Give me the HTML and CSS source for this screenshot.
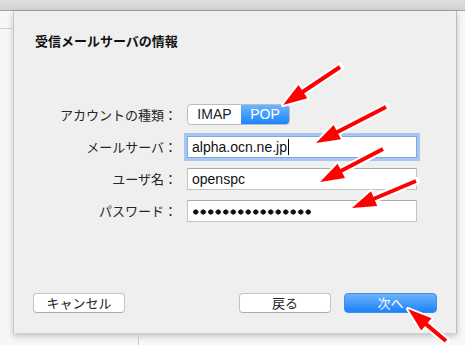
FILE: index.html
```html
<!DOCTYPE html>
<html>
<head>
  <meta charset="utf-8">
  <title>受信メールサーバの情報</title>
  <link rel="stylesheet" href="styles.css">
</head>
<body>
  <div class="toolbar"></div>

  <div class="sheet">
    <h1 class="title">受信メールサーバの情報</h1>

    <div class="form">
      <div class="label">アカウントの種類：</div>
      <div class="segmented">
        <span class="seg">IMAP</span>
        <span class="seg seg-on">POP</span>
      </div>

      <div class="label">メールサーバ：</div>
      <div class="field field-focus">alpha.ocn.ne.jp<span class="caret"></span></div>

      <div class="label">ユーザ名：</div>
      <div class="field">openspc</div>

      <div class="label">パスワード：</div>
      <div class="field"><span class="dots"></span></div>
    </div>

    <div class="buttons">
      <button class="btn">キャンセル</button>
      <div class="spacer"></div>
      <button class="btn">戻る</button>
      <button class="btn btn-default">次へ</button>
    </div>
  </div>

  <!-- red arrows pasted on top of the screenshot -->
  <svg class="arrows" width="465" height="345" viewBox="0 0 465 345">
    <defs>
      <marker id="head-w" markerUnits="userSpaceOnUse" markerWidth="30" markerHeight="24" refX="6" refY="8" orient="auto" overflow="visible">
        <path d="M0 0 L24 8 L0 16 Z" fill="#fff" stroke="#fff" stroke-width="4" stroke-linejoin="round"/>
      </marker>
      <marker id="head-r" markerUnits="userSpaceOnUse" markerWidth="30" markerHeight="24" refX="6" refY="8" orient="auto" overflow="visible">
        <path d="M0 0 L24 8 L0 16 Z" fill="#f00"/>
      </marker>
    </defs>
    <g class="outline" marker-end="url(#head-w)">
      <line x1="340" y1="67" x2="298" y2="95"/>
      <line x1="386" y1="107" x2="332" y2="134.8"/>
      <line x1="383" y1="149" x2="336" y2="173.6"/>
      <line x1="416" y1="181" x2="368.6" y2="201"/>
      <line x1="446" y1="341" x2="421.8" y2="320.6"/>
    </g>
    <g class="shaft" marker-end="url(#head-r)">
      <line x1="340" y1="67" x2="298" y2="95"/>
      <line x1="386" y1="107" x2="332" y2="134.8"/>
      <line x1="383" y1="149" x2="336" y2="173.6"/>
      <line x1="416" y1="181" x2="368.6" y2="201"/>
      <line x1="446" y1="341" x2="421.8" y2="320.6"/>
    </g>
  </svg>
</body>
</html>
```

FILE: styles.css
```css
html, body {
  margin: 0;
  width: 465px;
  height: 345px;
  overflow: hidden;
}
body {
  position: relative;
  background-color: #f7f7f7;
  font-family: "Liberation Sans", "Noto Sans CJK JP", sans-serif;
  font-size: 13px;
  color: #1e1e1e;
}
/* window behind the sheet */
body::before {
  content: "";
  position: absolute;
  left: 0;
  top: 28px;
  width: 13px;
  height: 1px;
  background: #cbcbcb;
}
body::after {
  content: "";
  position: absolute;
  left: 138px;
  top: 333px;
  width: 1px;
  height: 12px;
  background: #c9c9c9;
}
.toolbar {
  height: 10px;
  background: linear-gradient(#dedede, #d2d2d2);
  border-bottom: 1px solid #a0a0a0;
}

.sheet {
  box-sizing: border-box;
  width: 444px;
  height: 322px;
  margin-left: 13px;
  padding: 22px 19px 20px 19px;
  background-color: #efefef;
  border-left: 1px solid #c8c8c8;
  border-right: 1px solid #bcbcbc;
  box-shadow: 0 3px 6px rgba(0, 0, 0, 0.22);
  display: flex;
  flex-direction: column;
}
.title {
  margin: 0 0 0 2px;
  font-family: "Noto Sans CJK JP", sans-serif;
  font-size: 13px;
  font-weight: 700;
  line-height: 16px;
  color: #111;
}

.form {
  margin-top: 55px;
  display: grid;
  grid-template-columns: 144px 230px;
  grid-auto-rows: 22px;
  column-gap: 10px;
  row-gap: 10px;
}
.label {
  font-family: "Noto Sans CJK JP", sans-serif;
  text-align: right;
  line-height: 22px;
  color: #262626;
}

.segmented {
  display: flex;
  width: 103px;
  height: 21px;
  box-sizing: border-box;
  border: 1px solid #bdbdbd;
  border-radius: 4px;
  overflow: hidden;
  background: #fff;
}
.seg {
  width: 54px;
  text-align: center;
  line-height: 19px;
  font-size: 14px;
  color: #222;
}
.seg-on {
  width: 49px;
  background: linear-gradient(#6db5fb, #1b84fb);
  color: #fff;
}

.field {
  box-sizing: border-box;
  height: 22px;
  padding: 0 4px;
  border: 1px solid #c2c2c2;
  border-top-color: #ababab;
  background: #fff;
  line-height: 20px;
  font-size: 14px;
  color: #111;
  display: flex;
  align-items: center;
}
.field-focus {
  border-color: #7fa9e2;
  box-shadow: 0 0 0 3px #a8c7f0;
}
.caret {
  display: inline-block;
  width: 1px;
  height: 16px;
  margin-left: 1px;
  background: #000;
}
.dots {
  display: block;
  width: 120px;
  height: 6px;
  margin-top: 1px;
  background: radial-gradient(circle, #111 2.3px, transparent 2.9px) 0 0 / 7.5px 6px repeat-x;
}

.buttons {
  margin-top: auto;
  display: flex;
  gap: 13px;
}
.spacer {
  flex: 1;
}
.btn {
  box-sizing: border-box;
  width: 92px;
  height: 20px;
  padding: 0;
  border: 1px solid #c3c3c3;
  border-bottom-color: #adadad;
  border-radius: 4px;
  background: #fff;
  font-family: "Noto Sans CJK JP", sans-serif;
  font-size: 13px;
  line-height: 18px;
  color: #222;
}
.btn-default {
  width: 93px;
  border-color: #3b8ef0;
  background: linear-gradient(#6db3fa, #1a83fb);
  color: #fff;
}

.arrows {
  position: absolute;
  left: 0;
  top: 0;
}
.outline line {
  stroke: #fff;
  stroke-width: 8;
  stroke-linecap: round;
}
.shaft line {
  stroke: #f00;
  stroke-width: 4;
}
```
